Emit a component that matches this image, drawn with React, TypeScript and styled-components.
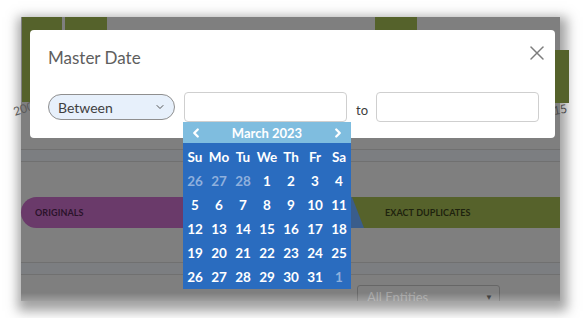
import React from 'react';
import styled, { createGlobalStyle } from 'styled-components';
import { ChevronDown, ChevronLeft, ChevronRight, X } from 'lucide-react';

const GlobalStyle = createGlobalStyle`
  html, body {
    margin: 0;
    padding: 0;
    background: #ffffff;
    font-family: 'Lato', 'Noto Sans', sans-serif;
  }
`;

const Stage = styled.div`
  width: 584px;
  height: 318px;
  padding: 17px 0 0 21px;
  box-sizing: border-box;
  overflow: hidden;
`;

const Frame = styled.div`
  position: relative;
  width: 539px;
  height: 284px;
  background: #7f7f7f;
  box-shadow: 2px 5px 11px 5px rgba(70, 70, 70, 0.5);

  &::after {
    content: '';
    position: absolute;
    left: 0;
    right: 0;
    bottom: 0;
    height: 8px;
    background: linear-gradient(rgba(255, 255, 255, 0), rgba(255, 255, 255, 0.25));
    pointer-events: none;
  }
`;

const Page = styled.div`
  display: flex;
  flex-direction: column;
  height: 100%;
  clip-path: inset(0 -30px 0 -30px);
`;

const Chart = styled.svg`
  display: block;
  flex: none;
  overflow: visible;
`;

const Band = styled.div<{ $top: number }>`
  flex: none;
  height: 11px;
  background: #7c7e81;
  border-top: 1px solid #707070;
  border-bottom: 1px solid #707070;
  margin-top: ${(p) => p.$top}px;
`;

const Tabs = styled.div`
  display: flex;
  height: 31px;
  margin-top: 35px;
  flex: none;
`;

const Tab = styled.div<{ $bg: string; $w?: number; $kind: 'first' | 'mid' | 'last' }>`
  display: flex;
  align-items: center;
  background: ${(p) => p.$bg};
  width: ${(p) => (p.$w ? `${p.$w}px` : 'auto')};
  flex: ${(p) => (p.$w ? 'none' : '1')};
  padding-left: ${(p) => (p.$kind === 'last' ? 33 : 14)}px;
  box-sizing: border-box;
  border-radius: ${(p) => (p.$kind === 'first' ? '16px 0 0 16px' : '0')};
  margin-left: ${(p) => (p.$kind === 'last' ? -12 : 0)}px;
  clip-path: ${(p) =>
    p.$kind === 'last' ? 'polygon(0 0, 100% 0, 100% 100%, 12px 100%)' : 'none'};
  font-size: 9px;
  font-weight: 700;
  letter-spacing: 0.1px;
  color: ${(p) => (p.$kind === 'last' ? '#1e230e' : '#2a132a')};
`;

const Bottom = styled.div`
  display: flex;
  padding: 10px 0 0 336px;
`;

const EntitySelect = styled.div`
  display: flex;
  align-items: center;
  justify-content: space-between;
  width: 143px;
  height: 24px;
  box-sizing: border-box;
  padding: 0 6px 0 9px;
  border: 1px solid #666;
  border-radius: 3px;
  color: #a2a2a2;
  font-size: 13px;
`;

const Caret = styled.span`
  color: #2b2b2b;
  font-size: 8px;
`;

const Modal = styled.div`
  position: absolute;
  left: 9px;
  top: 13px;
  width: 525px;
  height: 108px;
  background: #ffffff;
  border-radius: 4px;
  box-sizing: border-box;
  padding: 18px 6px 0 18px;
`;

const Header = styled.div`
  display: flex;
  justify-content: space-between;
  align-items: flex-start;
`;

const Title = styled.h2`
  margin: 0;
  font-size: 17px;
  line-height: 20px;
  font-weight: 400;
  color: #5e5e5e;
`;

const Close = styled.button`
  display: flex;
  border: none;
  background: none;
  padding: 0;
  margin-top: -7px;
  color: #7d7d7d;
`;

const Row = styled.div`
  display: flex;
  align-items: center;
  margin-top: 24px;
`;

const Select = styled.div`
  display: flex;
  align-items: center;
  justify-content: space-between;
  width: 127px;
  height: 26px;
  box-sizing: border-box;
  padding: 0 8px 0 9px;
  background: #e7f0fb;
  border: 1px solid #8f8f8f;
  border-radius: 13px;
  font-size: 14px;
  color: #3f3f3f;
`;

const Field = styled.div<{ $gap: number }>`
  position: relative;
  margin-left: ${(p) => p.$gap}px;
`;

const Input = styled.div`
  width: 163px;
  height: 30px;
  box-sizing: border-box;
  border: 1px solid #cfcfcf;
  border-radius: 4px;
  background: #fff;
`;

const To = styled.span`
  margin-left: 9px;
  margin-top: 6px;
  font-size: 13px;
  color: #3d3d3d;
`;

const Calendar = styled.div`
  position: absolute;
  top: 100%;
  left: -1px;
  width: 168px;
  background: #2a6cbf;
  z-index: 2;
`;

const CalHead = styled.div`
  display: flex;
  align-items: center;
  justify-content: space-between;
  height: 21px;
  padding: 0 6px;
  background: #7fbddf;
  color: #fff;
  font-size: 13px;
  font-weight: 700;
`;

const Grid = styled.div`
  display: grid;
  grid-template-columns: repeat(7, 24px);
  grid-auto-rows: 24px;
  padding-top: 2px;
`;

const Cell = styled.div<{ $muted?: boolean }>`
  display: flex;
  align-items: center;
  justify-content: center;
  font-size: 13.5px;
  font-weight: 700;
  color: ${(p) => (p.$muted ? '#8fb0dd' : '#ffffff')};
`;

const days = ['Su', 'Mo', 'Tu', 'We', 'Th', 'Fr', 'Sa'];

const dates: { d: number; muted?: boolean }[] = [
  { d: 26, muted: true },
  { d: 27, muted: true },
  { d: 28, muted: true },
  ...Array.from({ length: 31 }, (_, i) => ({ d: i + 1 })),
  { d: 1, muted: true },
];

const App: React.FC = () => {
  return (
    <>
      <GlobalStyle />
      <Stage>
        <Frame>
          <Page>
            <Chart width={539} height={132}>
              <rect x={1} y={0} width={40} height={85} fill="#55622b" />
              <rect x={44} y={0} width={42} height={85} fill="#55622b" />
              <rect x={354} y={0} width={42} height={85} fill="#55622b" />
              <rect x={534} y={33} width={14} height={53} fill="#55622b" />
              <text x={-6} y={99} fontSize={12} fill="#5a5a5a" transform="rotate(-18 -6 99)">
                200
              </text>
              <text x={533} y={98} fontSize={12} fill="#4a4a4a" transform="rotate(-10 533 98)">
                15
              </text>
            </Chart>
            <Band $top={0} />
            <Tabs>
              <Tab $bg="#6a3a6a" $w={175} $kind="first">ORIGINALS</Tab>
              <Tab $bg="#3a5d8b" $w={168} $kind="mid" />
              <Tab $bg="#56622b" $kind="last">EXACT DUPLICATES</Tab>
            </Tabs>
            <Band $top={34} />
            <Bottom>
              <EntitySelect>
                All Entities
                <Caret>▼</Caret>
              </EntitySelect>
            </Bottom>
          </Page>

          <Modal>
            <Header>
              <Title>Master Date</Title>
              <Close aria-label="Close">
                <X size={24} strokeWidth={1.5} />
              </Close>
            </Header>
            <Row>
              <Select>
                Between
                <ChevronDown size={12} strokeWidth={2} color="#555" />
              </Select>
              <Field $gap={9}>
                <Input />
                <Calendar>
                  <CalHead>
                    <ChevronLeft size={14} strokeWidth={4} />
                    <span>March 2023</span>
                    <ChevronRight size={14} strokeWidth={4} />
                  </CalHead>
                  <Grid>
                    {days.map((d) => (
                      <Cell key={d}>{d}</Cell>
                    ))}
                    {dates.map((x, i) => (
                      <Cell key={i} $muted={x.muted}>
                        {x.d}
                      </Cell>
                    ))}
                  </Grid>
                </Calendar>
              </Field>
              <To>to</To>
              <Field $gap={8}>
                <Input />
              </Field>
            </Row>
          </Modal>
        </Frame>
      </Stage>
    </>
  );
};

export default App;
